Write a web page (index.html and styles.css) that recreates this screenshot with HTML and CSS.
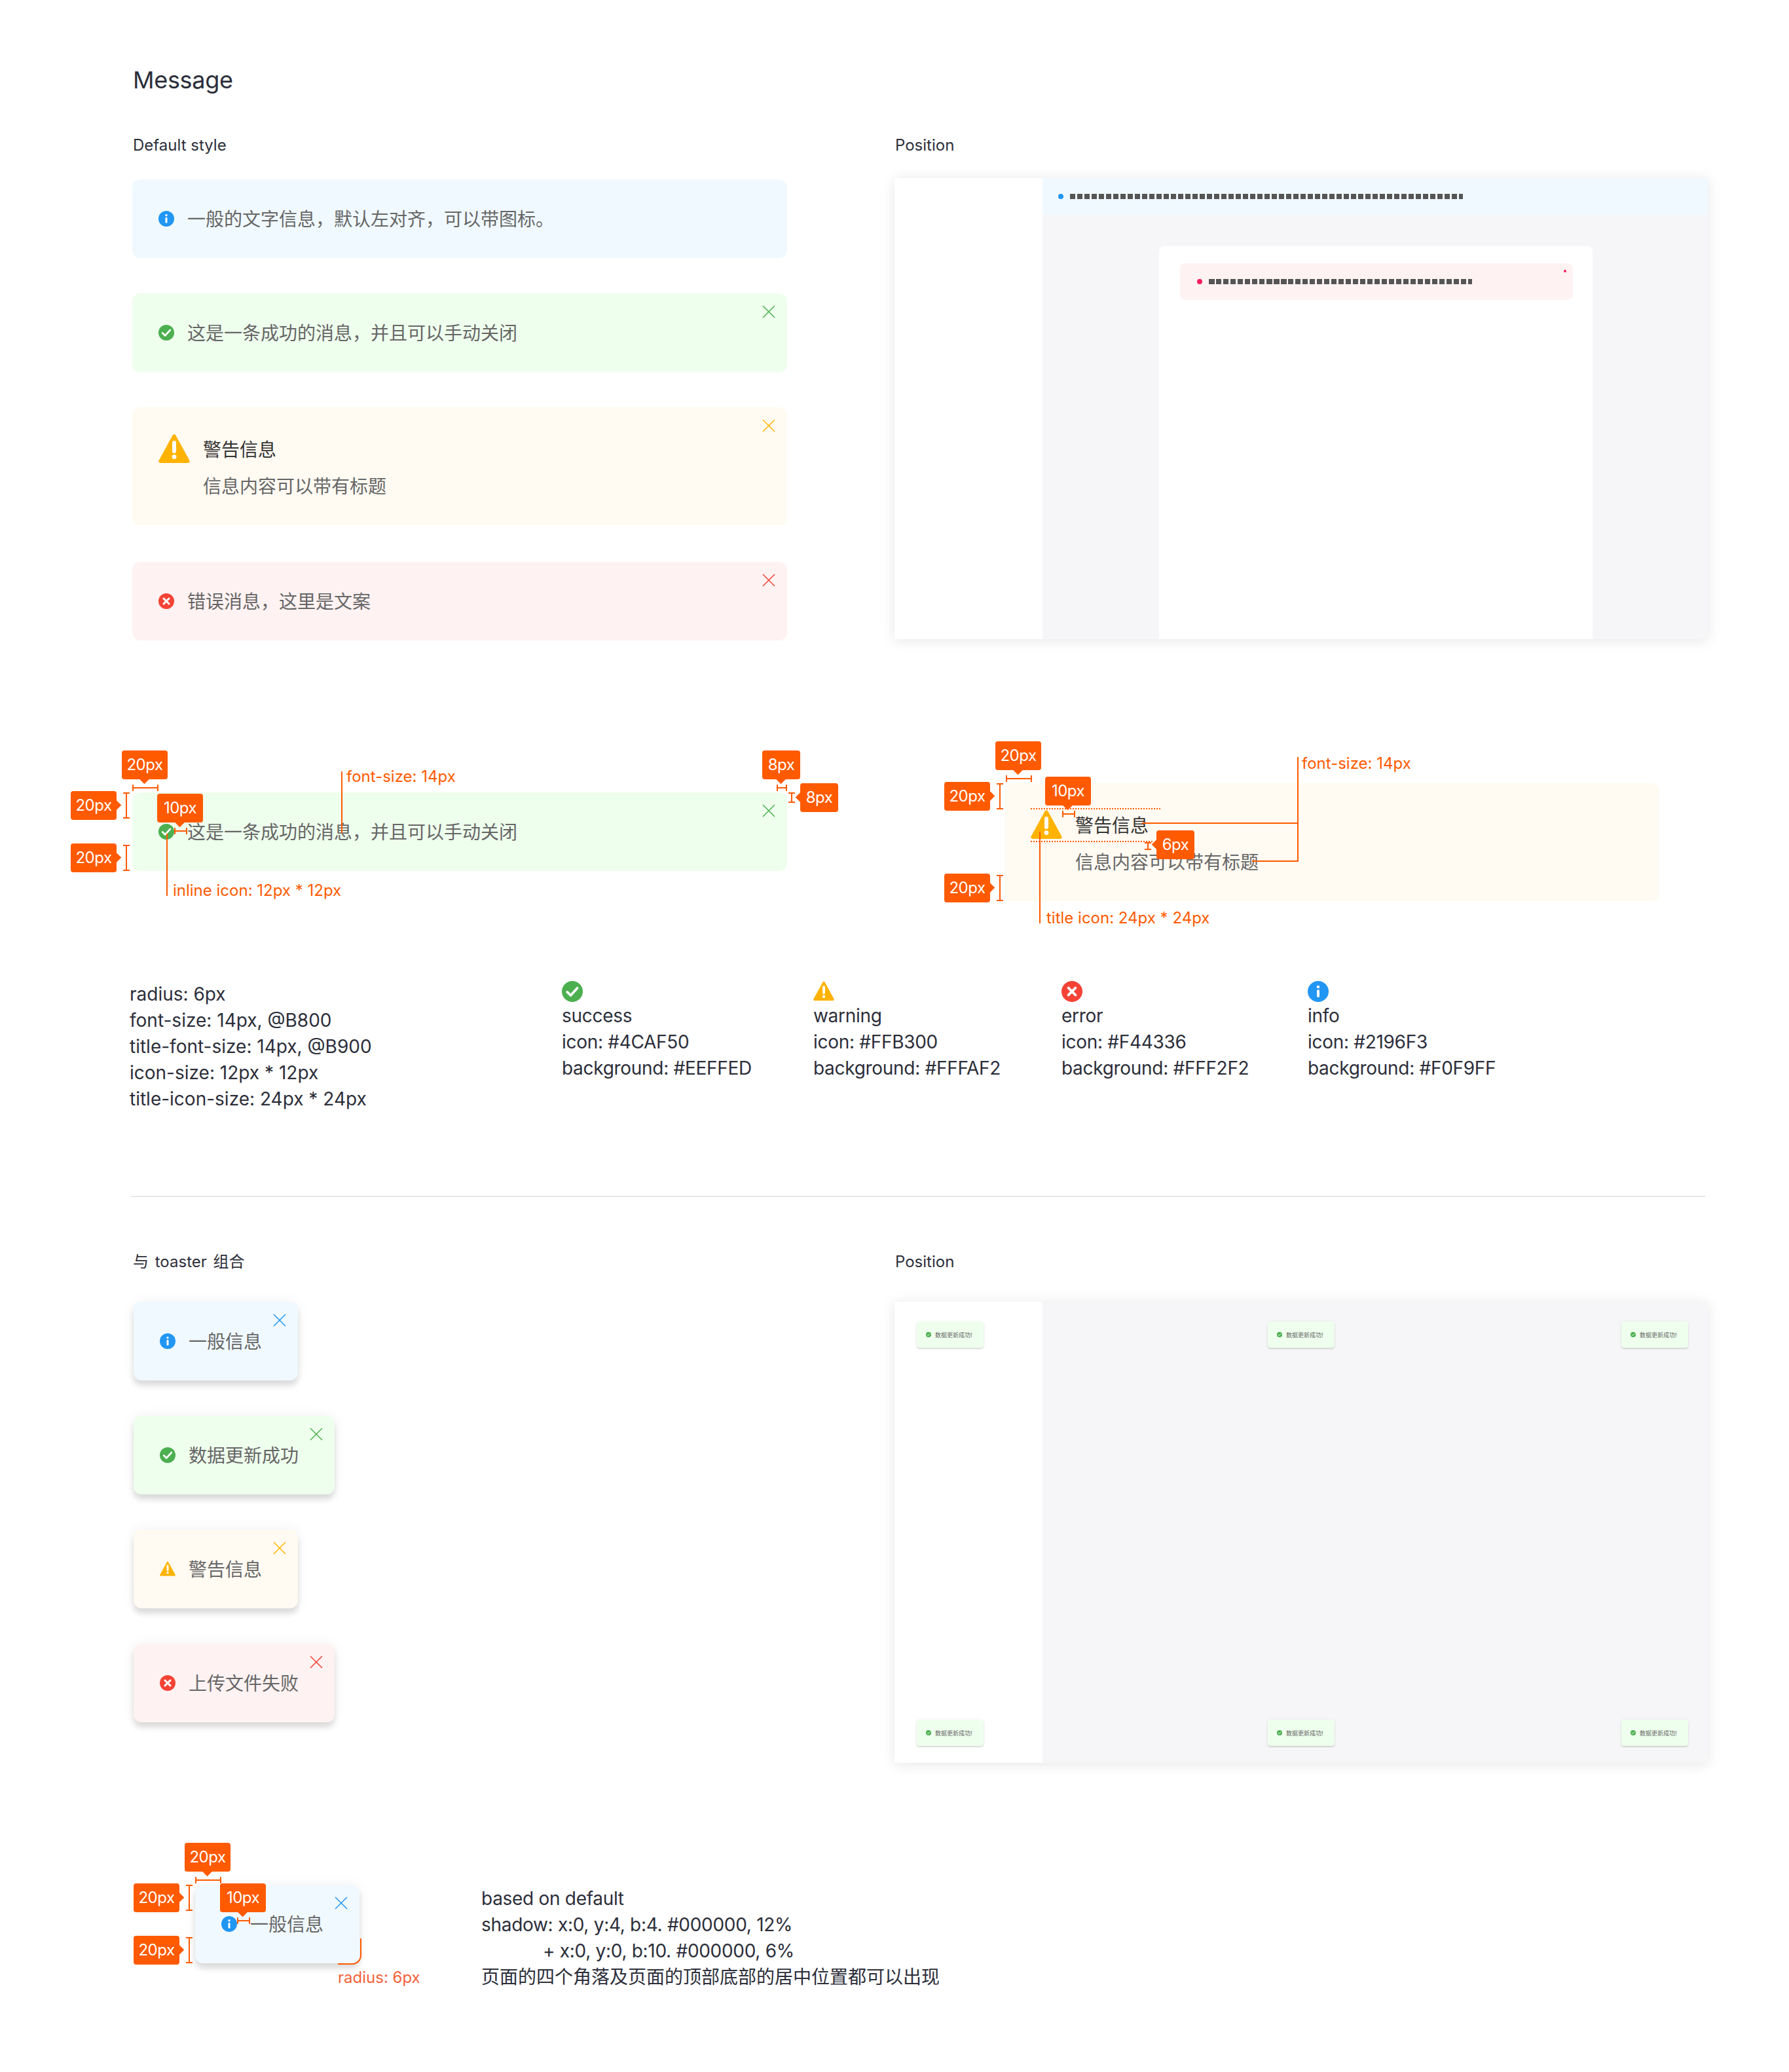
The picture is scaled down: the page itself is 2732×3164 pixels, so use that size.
FILE: index.html
```html
<!DOCTYPE html>
<html lang="zh-CN">
<head>
    <meta charset="UTF-8">
    <meta name="viewport" content="width=device-width, initial-scale=1.0">
    <title>Message</title>
    <link rel="stylesheet" href="styles.css">
</head>
<body>

<svg class="sprite" xmlns="http://www.w3.org/2000/svg">
    <symbol id="i-info" viewBox="0 0 24 24">
        <circle cx="12" cy="12" r="12" fill="#2196F3"/>
        <circle cx="12" cy="6.8" r="1.7" fill="#fff"/>
        <rect x="10.5" y="10" width="3" height="8.6" rx="1.2" fill="#fff"/>
    </symbol>
    <symbol id="i-success" viewBox="0 0 24 24">
        <circle cx="12" cy="12" r="12" fill="#4CAF50"/>
        <path d="M6.2 12.6l3.9 3.9 7.7-8.4" fill="none" stroke="#fff" stroke-width="2.8" stroke-linecap="round" stroke-linejoin="round"/>
    </symbol>
    <symbol id="i-warning" viewBox="0 0 24 24">
        <path d="M12 .6c.5 0 .9.3 1.2.8l10.4 19c.6 1.1 0 2.1-1.200 2.100H1.600c-1.200 0-1.800-1-1.200-2.100l10.400-19c.3-.5.7-.8 1.200-.8z" fill="#FFB300"/>
        <rect x="10.500" y="5.500" width="3" height="9.500" rx="1.500" fill="#fff"/>
        <circle cx="12" cy="17.800" r="1.700" fill="#fff"/>
    </symbol>
    <symbol id="i-error" viewBox="0 0 24 24">
        <circle cx="12" cy="12" r="12" fill="#F44336"/>
        <path d="M8 8l8 8M16 8l-8 8" fill="none" stroke="#fff" stroke-width="3" stroke-linecap="round"/>
    </symbol>
    <symbol id="i-close" viewBox="0 0 20 20">
        <path d="M1 1l18 18M19 1L1 19" fill="none" stroke="currentColor" stroke-width="1.500"/>
    </symbol>
</svg>

<div class="page">

    <h1 class="page-title">Message</h1>

    <section class="two-col">
        <div>
            <h2 class="sub-title">Default style</h2>
            <div class="msg msg-info">
                <svg class="icon"><use href="#i-info"/></svg>
                <span>一般的文字信息，默认左对齐，可以带图标。</span>
            </div>
            <div class="msg msg-success">
                <svg class="icon"><use href="#i-success"/></svg>
                <span>这是一条成功的消息，并且可以手动关闭</span>
                <svg class="msg-close"><use href="#i-close"/></svg>
            </div>
            <div class="msg msg-warning">
                <svg class="icon icon-title"><use href="#i-warning"/></svg>
                <div>
                    <div class="msg-title">警告信息</div>
                    <div class="msg-body">信息内容可以带有标题</div>
                </div>
                <svg class="msg-close"><use href="#i-close"/></svg>
            </div>
            <div class="msg msg-error">
                <svg class="icon"><use href="#i-error"/></svg>
                <span>错误消息，这里是文案</span>
                <svg class="msg-close"><use href="#i-close"/></svg>
            </div>
        </div>

        <div>
            <h2 class="sub-title sub-title-pos">Position</h2>
            <div class="frame">
                <div class="frame-side"></div>
                <div class="frame-main">
                    <div class="frame-band">
                        <i class="dot dot-blue"></i>
                        <i class="tofu tofu-long"></i>
                    </div>
                    <div class="frame-sheet">
                        <div class="frame-alert">
                            <i class="dot dot-red"></i>
                            <i class="tofu tofu-short"></i>
                            <i class="dot dot-red dot-mini"></i>
                        </div>
                    </div>
                </div>
            </div>
        </div>
    </section>

    <section class="spec-row">
        <div class="msg msg-success spec-inline">
            <svg class="icon"><use href="#i-success"/></svg>
            <span>这是一条成功的消息，并且可以手动关闭</span>
            <svg class="msg-close"><use href="#i-close"/></svg>

            <i class="rule-h pad-left-rule"></i>
            <b class="tag tag-down pad-left-tag">20px</b>
            <i class="rule-v pad-top-rule"></i>
            <b class="tag tag-right pad-top-tag">20px</b>
            <i class="rule-v pad-bottom-rule"></i>
            <b class="tag tag-right pad-bottom-tag">20px</b>
            <i class="rule-h gap-rule"></i>
            <b class="tag tag-down gap-tag">10px</b>

            <i class="lead font-lead"></i>
            <span class="lead-text font-text">font-size: 14px</span>
            <i class="lead icon-lead"></i>
            <span class="lead-text icon-text">inline icon: 12px * 12px</span>

            <i class="rule-h close-x-rule"></i>
            <b class="tag tag-small tag-down close-x-tag">8px</b>
            <i class="rule-v close-y-rule"></i>
            <b class="tag tag-small tag-left close-y-tag">8px</b>
        </div>

        <div class="msg msg-warning">
            <svg class="icon icon-title"><use href="#i-warning"/></svg>
            <div>
                <div class="msg-title">警告信息</div>
                <div class="msg-body">信息内容可以带有标题</div>
            </div>

            <i class="rule-h t-left-rule"></i>
            <b class="tag tag-down t-left-tag">20px</b>
            <i class="rule-v t-top-rule"></i>
            <b class="tag tag-right t-top-tag">20px</b>
            <i class="rule-v t-bottom-rule"></i>
            <b class="tag tag-right t-bottom-tag">20px</b>
            <i class="dotted t-dot-top"></i>
            <i class="dotted t-dot-bottom"></i>
            <i class="rule-h t-gap-rule"></i>
            <b class="tag tag-down t-gap-tag">10px</b>

            <i class="lead t-title-lead"></i>
            <i class="lead t-body-lead"></i>
            <i class="lead t-up-lead"></i>
            <span class="lead-text t-font-text">font-size: 14px</span>
            <i class="rule-v t-six-rule"></i>
            <b class="tag tag-small tag-left t-six-tag">6px</b>
            <i class="lead t-icon-lead"></i>
            <span class="lead-text t-icon-text">title icon: 24px * 24px</span>
        </div>
    </section>

    <section class="tokens">
        <div class="token-list">
            <p>radius: 6px</p>
            <p>font-size: 14px, @B800</p>
            <p>title-font-size: 14px, @B900</p>
            <p>icon-size: 12px * 12px</p>
            <p>title-icon-size: 24px * 24px</p>
        </div>
        <div class="token-col">
            <svg class="token-icon"><use href="#i-success"/></svg>
            <p>success</p>
            <p>icon: #4CAF50</p>
            <p>background: #EEFFED</p>
        </div>
        <div class="token-col">
            <svg class="token-icon"><use href="#i-warning"/></svg>
            <p>warning</p>
            <p>icon: #FFB300</p>
            <p>background: #FFFAF2</p>
        </div>
        <div class="token-col">
            <svg class="token-icon"><use href="#i-error"/></svg>
            <p>error</p>
            <p>icon: #F44336</p>
            <p>background: #FFF2F2</p>
        </div>
        <div class="token-col">
            <svg class="token-icon"><use href="#i-info"/></svg>
            <p>info</p>
            <p>icon: #2196F3</p>
            <p>background: #F0F9FF</p>
        </div>
    </section>

    <hr class="divider">

    <section class="two-col">
        <div>
            <h2 class="sub-title sub-title-low sub-title-mixed">与 toaster 组合</h2>
            <div class="toast-list">
                <div class="msg toast msg-info">
                    <svg class="icon"><use href="#i-info"/></svg>
                    <span>一般信息</span>
                    <svg class="msg-close"><use href="#i-close"/></svg>
                </div>
                <div class="msg toast msg-success">
                    <svg class="icon"><use href="#i-success"/></svg>
                    <span>数据更新成功</span>
                    <svg class="msg-close"><use href="#i-close"/></svg>
                </div>
                <div class="msg toast msg-warning">
                    <svg class="icon"><use href="#i-warning"/></svg>
                    <span>警告信息</span>
                    <svg class="msg-close"><use href="#i-close"/></svg>
                </div>
                <div class="msg toast msg-error">
                    <svg class="icon"><use href="#i-error"/></svg>
                    <span>上传文件失败</span>
                    <svg class="msg-close"><use href="#i-close"/></svg>
                </div>
            </div>
        </div>

        <div>
            <h2 class="sub-title sub-title-low">Position</h2>
            <div class="frame frame-toasts">
                <div class="frame-side"></div>
                <div class="frame-main"></div>
                <div class="mini-grid">
                    <div class="mini"><svg><use href="#i-success"/></svg>数据更新成功!</div>
                    <div class="mini"><svg><use href="#i-success"/></svg>数据更新成功!</div>
                    <div class="mini"><svg><use href="#i-success"/></svg>数据更新成功!</div>
                    <div class="mini"><svg><use href="#i-success"/></svg>数据更新成功!</div>
                    <div class="mini"><svg><use href="#i-success"/></svg>数据更新成功!</div>
                    <div class="mini"><svg><use href="#i-success"/></svg>数据更新成功!</div>
                </div>
            </div>
        </div>
    </section>

    <section class="toast-spec">
        <div class="msg toast msg-info">
            <svg class="icon"><use href="#i-info"/></svg>
            <span>一般信息</span>
            <svg class="msg-close"><use href="#i-close"/></svg>

            <i class="rule-h pad-left-rule"></i>
            <b class="tag tag-down pad-left-tag">20px</b>
            <i class="rule-v pad-top-rule"></i>
            <b class="tag tag-right pad-top-tag">20px</b>
            <i class="rule-v pad-bottom-rule"></i>
            <b class="tag tag-right pad-bottom-tag">20px</b>
            <i class="rule-h toast-gap-rule"></i>
            <b class="tag tag-down toast-gap-tag">10px</b>

            <i class="corner"></i>
            <span class="lead-text corner-text">radius: 6px</span>
        </div>
        <div class="toast-notes">
            <p>based on default</p>
            <p>shadow: x:0, y:4, b:4. #000000, 12%</p>
            <p class="note-indent">+ x:0, y:0, b:10. #000000, 6%</p>
            <p class="note-cjk">页面的四个角落及页面的顶部底部的居中位置都可以出现</p>
        </div>
    </section>

</div>

</body>
</html>
```

FILE: styles.css
```css
body {
    margin: 0;
    background-color: #fff;
    font-family: Inter, "Noto Sans CJK SC", sans-serif;
    color: #2c2e3a;
}
p {
    margin: 0;
}
.sprite {
    display: none;
}
.page {
    width: 2732px;
    height: 3164px;
    padding-top: 98px;
    box-sizing: border-box;
    overflow: hidden;
}
.page-title {
    margin: 0 0 60px 203px;
    font-size: 36px;
    line-height: 48px;
    font-weight: 400;
    letter-spacing: -0.3px;
}
.two-col {
    display: grid;
    grid-template-columns: 1000px 1242px;
    column-gap: 164px;
    padding-left: 202px;
}
.sub-title {
    margin: 0 0 36px 1px;
    font-size: 24px;
    line-height: 32px;
    font-weight: 400;
}
.sub-title-pos {
    margin-bottom: 34px;
}
.sub-title-low {
    margin-bottom: 45px;
}
.sub-title-mixed {
    word-spacing: 3px;
}

/* message */
.msg {
    position: relative;
    display: flex;
    align-items: flex-start;
    gap: 20px;
    padding: 41px 40px 39px;
    border-radius: 12px;
    font-size: 28px;
    line-height: 40px;
    color: #666;
}
.msg + .msg {
    margin-top: 54px;
}
.msg + .msg-error {
    margin-top: 56px;
}
.msg-info {
    background-color: #F0F9FF;
}
.msg-success {
    background-color: #EEFFED;
}
.msg-warning {
    background-color: #FFFAF2;
}
.msg-error {
    background-color: #FFF2F2;
}
.icon {
    flex: none;
    width: 24px;
    height: 24px;
    margin-top: 7px;
}
.icon-title {
    width: 48px;
    height: 48px;
    margin-top: -1px;
}
.msg-title {
    line-height: 48px;
    color: #333;
}
.msg-body {
    margin-top: 12px;
}
.msg-close {
    position: absolute;
    top: 18px;
    right: 18px;
    width: 20px;
    height: 20px;
}
.msg-info .msg-close {
    color: #2196F3;
}
.msg-success .msg-close {
    color: #4CAF50;
}
.msg-warning .msg-close {
    color: #FFB300;
}
.msg-error .msg-close {
    color: #F44336;
}

/* page frame */
.frame {
    display: flex;
    height: 704px;
    box-shadow: 0 2px 20px rgba(0, 0, 0, 0.1);
}
.frame-side {
    flex: none;
    width: 226px;
    background-color: #fff;
}
.frame-main {
    flex: 1;
    display: flex;
    flex-direction: column;
    background-color: #F6F6F8;
}
.frame-band {
    display: flex;
    align-items: center;
    gap: 10px;
    height: 56px;
    padding-left: 24px;
    background-color: #F0F9FF;
}
.frame-sheet {
    flex: 1;
    width: 662px;
    margin: 48px 0 0 178px;
    padding: 26px 0 0 32px;
    box-sizing: border-box;
    background-color: #fff;
    border-radius: 8px 8px 0 0;
}
.frame-alert {
    position: relative;
    display: flex;
    align-items: center;
    gap: 10px;
    width: 600px;
    height: 56px;
    padding-left: 26px;
    box-sizing: border-box;
    background-color: #FFF2F2;
    border-radius: 8px;
}
.dot {
    flex: none;
    width: 8px;
    height: 8px;
    border-radius: 50%;
}
.dot-blue {
    background-color: #2196F3;
}
.dot-red {
    background-color: #FA1E5F;
}
.dot-mini {
    position: absolute;
    top: 10px;
    right: 10px;
    width: 4px;
    height: 4px;
}
.tofu {
    height: 8px;
    background: repeating-linear-gradient(90deg, #555 0, #555 8.5px, transparent 8.5px, transparent 11px);
}
.tofu-long {
    width: 600px;
}
.tofu-short {
    width: 402px;
}

/* annotated samples */
.spec-row {
    display: grid;
    grid-template-columns: 1000px 1000px;
    column-gap: 332px;
    align-items: start;
    margin-top: 218px;
    padding-left: 202px;
}
.spec-row .msg + .msg {
    margin-top: 0;
}
.spec-inline {
    margin-top: 14px;
}
.tag {
    position: absolute;
    display: block;
    width: 70px;
    height: 44px;
    border-radius: 4px;
    background-color: #FF5A00;
    color: #fff;
    font-size: 24px;
    line-height: 44px;
    font-weight: 400;
    letter-spacing: -0.5px;
    text-align: center;
}
.tag-small {
    width: 58px;
}
.tag::after {
    content: "";
    position: absolute;
    width: 11px;
    height: 11px;
    background-color: #FF5A00;
    transform: rotate(45deg);
}
.tag-down::after {
    left: calc(50% - 6px);
    bottom: -5px;
}
.tag-right::after {
    right: -5px;
    top: 16px;
}
.tag-left::after {
    left: -5px;
    top: 16px;
}
.rule-h, .rule-v, .lead, .dotted, .corner {
    position: absolute;
    display: block;
    box-sizing: border-box;
}
.rule-h {
    height: 10px;
    border: solid #FF5A00;
    border-width: 0 2px;
    background: linear-gradient(#FF5A00, #FF5A00) center / 100% 2px no-repeat;
}
.rule-v {
    width: 10px;
    border: solid #FF5A00;
    border-width: 2px 0;
    background: linear-gradient(#FF5A00, #FF5A00) center / 2px 100% no-repeat;
}
.lead {
    background-color: #FF5A00;
}
.lead-text {
    position: absolute;
    font-size: 24px;
    line-height: 32px;
    color: #FF5A00;
    white-space: nowrap;
}
.dotted {
    height: 2px;
    background: repeating-linear-gradient(90deg, #FF5A00 0, #FF5A00 2px, transparent 2px, transparent 4px);
}

.pad-left-rule { left: 0; top: -12px; width: 40px; }
.pad-left-tag { left: -16px; top: -64px; }
.pad-top-rule { left: -14px; top: 0; height: 40px; }
.pad-top-tag { left: -94px; top: -2px; }
.pad-bottom-rule { left: -14px; top: 80px; height: 40px; }
.pad-bottom-tag { left: -94px; top: 78px; }
.gap-rule { left: 64px; top: 54px; width: 20px; }
.gap-tag { left: 38px; top: 2px; }
.font-lead { left: 319px; top: -32px; width: 2px; height: 94px; }
.font-text { left: 327px; top: -40px; }
.icon-lead { left: 52px; top: 63px; width: 2px; height: 95px; }
.icon-text { left: 62px; top: 134px; }
.close-x-rule { left: 984px; top: -12px; width: 16px; }
.close-x-tag { left: 962px; top: -64px; }
.close-y-rule { left: 1002px; top: 0; height: 16px; }
.close-y-tag { left: 1020px; top: -14px; }

.t-left-rule { left: 2px; top: -12px; width: 40px; }
.t-left-tag { left: -14px; top: -64px; }
.t-top-rule { left: -12px; top: 0; height: 40px; }
.t-top-tag { left: -92px; top: -2px; }
.t-bottom-rule { left: -12px; top: 140px; height: 40px; }
.t-bottom-tag { left: -92px; top: 138px; }
.t-dot-top { left: 40px; top: 38px; width: 198px; }
.t-dot-bottom { left: 40px; top: 88px; width: 186px; }
.t-gap-rule { left: 88px; top: 42px; width: 20px; }
.t-gap-tag { left: 62px; top: -10px; }
.t-title-lead { left: 210px; top: 60px; width: 238px; height: 2px; }
.t-body-lead { left: 378px; top: 118px; width: 70px; height: 2px; }
.t-up-lead { left: 447px; top: -40px; width: 2px; height: 160px; }
.t-font-text { left: 454px; top: -46px; }
.t-six-rule { left: 214px; top: 90px; height: 12px; }
.t-six-tag { left: 232px; top: 72px; }
.t-icon-lead { left: 53px; top: 74px; width: 2px; height: 140px; }
.t-icon-text { left: 64px; top: 190px; }

/* tokens */
.tokens {
    display: grid;
    grid-template-columns: 660px 384px 379px 376px 300px;
    margin-top: 122px;
    padding-left: 198px;
    font-size: 28px;
    line-height: 40px;
}
.token-col {
    letter-spacing: -0.3px;
}
.token-icon {
    display: block;
    width: 32px;
    height: 32px;
    margin-bottom: 1px;
}

.divider {
    width: 2404px;
    height: 2px;
    margin: 128px 0 83px 200px;
    border: 0;
    background-color: #E8E8E8;
}

/* toaster */
.toast-list {
    display: flex;
    flex-direction: column;
    align-items: flex-start;
    gap: 54px;
    margin: 1px 0 0 2px;
}
.toast {
    padding-right: 55px;
    box-shadow: 0 8px 8px rgba(0, 0, 0, 0.12), 0 0 20px rgba(0, 0, 0, 0.06);
}
.toast-list .msg + .msg {
    margin-top: 0;
}
.frame-toasts {
    position: relative;
}
.mini-grid {
    position: absolute;
    inset: 30px 0 26px 34px;
    display: grid;
    grid-template-columns: 536px 540px 102px;
    align-content: space-between;
}
.mini {
    display: flex;
    align-items: center;
    gap: 6px;
    width: 102px;
    height: 40px;
    padding-left: 14px;
    box-sizing: border-box;
    background-color: #EEFFED;
    border-radius: 4px;
    box-shadow: 0 2px 2px rgba(0, 0, 0, 0.12), 0 0 5px rgba(0, 0, 0, 0.06);
    font-size: 9px;
    color: #666;
    white-space: nowrap;
}
.mini svg {
    flex: none;
    width: 8px;
    height: 8px;
}

.toast-spec {
    display: flex;
    align-items: flex-start;
    gap: 186px;
    margin-top: 186px;
    padding-left: 298px;
}
.toast-notes {
    padding-top: 1px;
    font-size: 28px;
    line-height: 40px;
    letter-spacing: -0.3px;
}
.note-indent {
    padding-left: 94px;
}
.note-cjk {
    letter-spacing: 0;
}
.toast-gap-rule { left: 64px; top: 50px; width: 20px; }
.toast-gap-tag { left: 38px; top: -2px; }
.corner {
    left: 218px;
    top: 82px;
    width: 36px;
    height: 40px;
    border: solid #FF5A00;
    border-width: 0 2px 2px 0;
    border-bottom-right-radius: 14px;
}
.corner-text {
    left: 218px;
    top: 126px;
    color: #F4623A;
}
```
